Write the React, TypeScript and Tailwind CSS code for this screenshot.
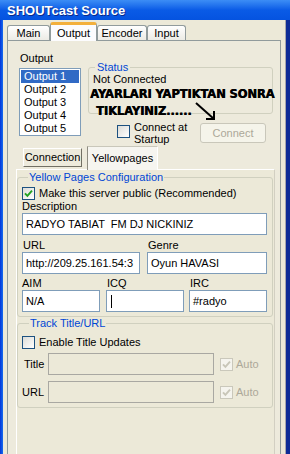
import React from "react";

const font = "font-['Liberation_Sans',Arial,sans-serif]";

function CheckBox({ checked, disabled }: { checked?: boolean; disabled?: boolean }) {
  return (
    <div
      className={`w-[13px] h-[13px] shrink-0 border flex items-center justify-center ${
        disabled ? "border-[#CAC8BB] bg-[#F5F4EE]" : "border-[#1C5180] bg-linear-to-br from-[#DCDCD7] to-white"
      }`}
    >
      {checked && (
        <svg width="9" height="9" viewBox="0 0 9 9">
          <path d="M1 4.3 L3.4 6.8 L8 1.6" fill="none" stroke={disabled ? "#C8C6B8" : "#21A121"} strokeWidth="1.9" />
        </svg>
      )}
    </div>
  );
}

function TextBox({ value, disabled, caret, className = "" }: { value?: string; disabled?: boolean; caret?: boolean; className?: string }) {
  return (
    <div
      className={`h-[22px] border flex items-center px-[3px] whitespace-nowrap overflow-hidden ${
        disabled ? "border-[#A9A8A2] bg-[#ECE9D8]" : "border-[#7F9DB9] bg-white"
      } ${className}`}
    >
      {caret && <span className="w-[1px] h-[13px] bg-black ml-[1px]" />}
      {value}
    </div>
  );
}

function Tab({ label, selected, className = "" }: { label: string; selected?: boolean; className?: string }) {
  return selected ? (
    <div
      className={`h-[19px] -mb-px relative z-10 flex items-center justify-center border-x border-[#919B9C] border-t-[3px] border-t-[#F3B03C] bg-[#FCFCFE] rounded-t-[3px] ${className}`}
    >
      {label}
    </div>
  ) : (
    <div
      className={`h-[15px] flex items-center justify-center border border-b-0 border-[#919B9C] bg-linear-to-b from-white to-[#ECEBE5] rounded-t-[3px] pt-[1px] ${className}`}
    >
      {label}
    </div>
  );
}

export default function App() {
  const outputs = ["Output 1", "Output 2", "Output 3", "Output 4", "Output 5"];

  return (
    <div className={`w-[290px] h-[454px] overflow-hidden flex flex-col bg-[#0A3DD6] text-[11px] leading-[13px] text-black ${font}`}>
      {/* title bar */}
      <div className="h-[20px] shrink-0 flex items-center pl-[7px] bg-linear-to-b from-[#3C8DF5] via-[#0A5BE6] to-[#0553E0] text-white font-bold text-[13px] [text-shadow:1px_1px_0_#0A2A8A]">
        SHOUTcast Source
      </div>

      <div className="flex flex-1 min-h-0">
        <div className="w-[3px] shrink-0 bg-linear-to-r from-[#0831D9] to-[#1A6BEE]" />

        <div className="flex-1 min-w-0 flex flex-col bg-[#ECE9D8] pt-[2px] px-[4px]">
          {/* main tabs */}
          <div className="flex items-end h-[18px] shrink-0">
            <Tab label="Main" className="w-[43px]" />
            <Tab label="Output" selected className="w-[47px]" />
            <Tab label="Encoder" className="w-[50px]" />
            <Tab label="Input" className="w-[39px]" />
          </div>

          {/* output panel */}
          <div className="relative flex-1 flex flex-col border border-b-0 border-[#919B9C] bg-[#EDEADC]">
            {/* top section */}
            <div className="flex pl-[11px] pt-[11px] pr-[7px]">
              <div className="w-[62px] shrink-0">
                <div className="pl-[1px]">Output</div>
                <div className="mt-[3px] h-[68px] border border-[#7F9DB9] bg-white pt-[1px]">
                  {outputs.map((o, i) => (
                    <div key={o} className={`h-[13px] mx-[1px] pl-[3px] ${i === 0 ? "bg-[#316AC5] text-white" : ""}`}>
                      {o}
                    </div>
                  ))}
                </div>
              </div>

              <div className="ml-[7px] flex-1 flex flex-col">
                <fieldset className="mt-[9px] h-[53px] border border-[#D0D0BF] rounded-[3px]">
                  <legend className="ml-[6px] px-[2px] text-[#0046D5]">Status</legend>
                  <div className="pl-[4px] -mt-[1px]">Not Connected</div>
                </fieldset>

                <div className="mt-[7px] flex items-start pl-[29px]">
                  <div className="mt-[4px]">
                    <CheckBox />
                  </div>
                  <div className="ml-[4px] leading-[12px]">
                    Connect at
                    <br />
                    Startup
                  </div>
                  <div className="ml-auto mr-[7px] mt-[2px] w-[66px] h-[20px] border border-[#C9C7BA] rounded-[3px] bg-[#F5F4EA] text-[#ACA899] flex items-center justify-center">
                    Connect
                  </div>
                </div>
              </div>
            </div>

            {/* annotation pasted over the dialog */}
            <div className="absolute left-[82px] top-[45px] font-['DejaVu_Sans',sans-serif] font-black text-[11.5px] leading-[17px] whitespace-nowrap tracking-[-0.1px] [text-shadow:0.5px_0_0_#000]">
              <div>AYARLARI YAPTIKTAN SONRA</div>
              <div className="pl-[6px]">TIKLAYINIZ......</div>
            </div>
            <svg className="absolute left-[187px] top-[60px]" width="22" height="22" viewBox="0 0 22 22">
              <path d="M1 2 L19 18" stroke="black" strokeWidth="2" fill="none" />
              <path d="M19 10 L19 18 L11 18" stroke="black" strokeWidth="2" fill="none" />
            </svg>

            {/* sub tabs */}
            <div className="mt-[1px] h-[23px] flex items-start pl-[15px] shrink-0">
              <div className="mt-[2px] w-[59px] h-[19px] border border-t-white border-l-white border-r-[#716F64] border-b-[#716F64] flex items-center justify-center">
                Connection
              </div>
              <div className="ml-[5px] w-[71px] h-[24px] relative z-10 border-l border-t border-l-[#8E8C82] border-t-[#C9C7BA] border-r border-r-white bg-[#F6F5F0] flex items-center justify-center">
                Yellowpages
              </div>
            </div>

            {/* yellowpages panel */}
            <div className="ml-[8px] mr-[5px] flex-1 flex flex-col border-t border-l border-white border-r border-r-[#D2CFC2] bg-[#ECE9D8]">
              <fieldset className="mt-[1px] mr-[1px] border border-[#D0D0BF] rounded-[3px] pl-[4px] pr-[5px] pb-[4px]">
                <legend className="ml-[6px] px-[1px] text-[#0046D5]">Yellow Pages Configuration</legend>
                <div className="mt-[3px] flex items-center h-[13px]">
                  <CheckBox checked />
                  <span className="ml-[4px] whitespace-nowrap">Make this server public (Recommended)</span>
                </div>
                <div>Description</div>
                <TextBox value="RADYO TABIAT  FM DJ NICKINIZ" className="whitespace-pre" />

                <div className="mt-[4px] flex">
                  <div className="w-[118px] shrink-0">
                    <div className="pl-[1px]">URL</div>
                    <TextBox value="http://209.25.161.54:3" />
                  </div>
                  <div className="ml-[7px] flex-1">
                    <div className="pl-[1px]">Genre</div>
                    <TextBox value="Oyun HAVASI" />
                  </div>
                </div>

                <div className="mt-[3px] flex">
                  <div className="w-[78px] shrink-0">
                    <div>AIM</div>
                    <TextBox value="N/A" />
                  </div>
                  <div className="ml-[6px] w-[78px] shrink-0">
                    <div className="pl-[1px]">ICQ</div>
                    <TextBox caret />
                  </div>
                  <div className="ml-[5px] flex-1">
                    <div className="pl-[1px]">IRC</div>
                    <TextBox value="#radyo" />
                  </div>
                </div>
              </fieldset>

              <fieldset className="mr-[1px] border border-[#D0D0BF] rounded-[3px] pl-[4px] pr-[5px] pb-[4px]">
                <legend className="ml-[7px] px-[1px] text-[#0046D5]">Track Title/URL</legend>
                <div className="mt-[6px] flex items-center h-[13px]">
                  <CheckBox />
                  <span className="ml-[4px]">Enable Title Updates</span>
                </div>
                <div className="mt-[4px] flex items-center">
                  <div className="w-[26px] pl-[2px]">Title</div>
                  <TextBox disabled className="w-[166px]" />
                  <div className="ml-[6px] flex items-center">
                    <CheckBox checked disabled />
                    <span className="ml-[3px] text-[#ACA899]">Auto</span>
                  </div>
                </div>
                <div className="mt-[6px] flex items-center">
                  <div className="w-[26px]">URL</div>
                  <TextBox disabled className="w-[166px]" />
                  <div className="ml-[6px] flex items-center">
                    <CheckBox checked disabled />
                    <span className="ml-[3px] text-[#ACA899]">Auto</span>
                  </div>
                </div>
              </fieldset>
            </div>
          </div>
        </div>

        <div className="w-[5px] shrink-0 bg-[#0D2B96] border-l border-[#A7A6AA]" />
      </div>
    </div>
  );
}
